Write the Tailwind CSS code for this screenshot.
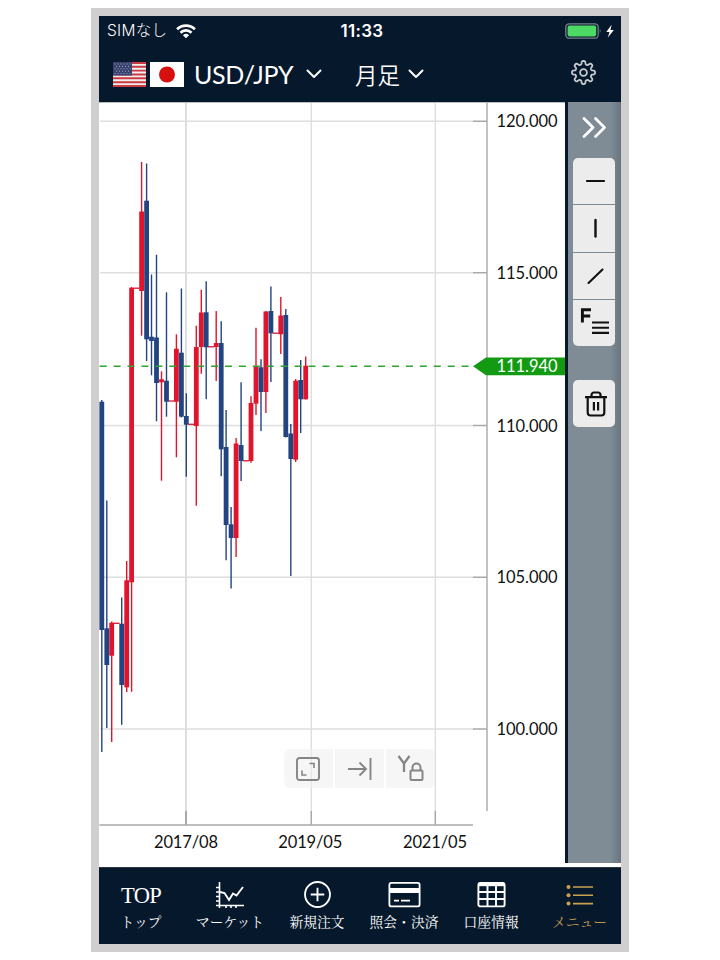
<!DOCTYPE html>
<html lang="ja">

<head>
    <meta charset="UTF-8">
    <meta name="viewport" content="width=device-width, initial-scale=1.0">
    <title>USD/JPY 月足チャート</title>
    <script src="https://cdn.jsdelivr.net/npm/@tailwindcss/browser@4"></script>
</head>

<body class="bg-white h-screen overflow-hidden flex justify-center pt-2">
<div class="w-[538px] h-[944px] border-8 border-[#d0cece] bg-[#06182c] flex flex-col">

    <!-- status bar -->
    <div class="h-[30px] shrink-0 grid grid-cols-3 items-center pl-2 pr-[6px] text-white font-['Inter','Noto_Sans_CJK_JP',sans-serif]">
        <div class="flex items-center gap-[9px]">
            <span class="text-[15.5px] leading-none font-light tracking-[0.3px]">SIMなし</span>
            <svg class="w-5 h-[15px]" viewBox="0 0 20 15" fill="none" stroke="#fff" stroke-width="2.7">
                <path d="M1.1 5.2a12.7 12.7 0 0 1 17.8 0" />
                <path d="M4.5 8.7a7.9 7.9 0 0 1 11 0" />
                <path d="M10 14.2 6.9 11.2a4.6 4.6 0 0 1 6.2 0z" fill="#fff" stroke="none" />
            </svg>
        </div>
        <div class="text-center text-[17px] leading-none font-semibold tracking-[0.3px] pl-[2px]">11:33</div>
        <div class="flex justify-end">
            <svg class="w-[50px] h-4" viewBox="0 0 50 16">
                <rect x=".8" y=".8" width="32.4" height="14.4" rx="3.5" fill="none" stroke="#76818c" stroke-width="1.3" />
                <rect x="2.6" y="2.6" width="28.6" height="10.8" rx="1.8" fill="#4cd964" />
                <path d="M34.8 5.5q1.8 2.5 0 5z" fill="#76818c" />
                <path d="M46.6 1.8 41.3 9h3.2l-1.6 5.4L48.8 7h-3.3z" fill="#fff" />
            </svg>
        </div>
    </div>

    <!-- pair and period -->
    <div class="h-14 shrink-0 flex items-center pl-[14px] pr-6 text-white">
        <svg class="w-[33px] h-[25px]" viewBox="0 0 33 25">
            <rect width="33" height="25" fill="#f3eeee" />
            <path d="M0 1h33M0 4.8h33M0 8.6h33M0 12.5h33M0 16.3h33M0 20.2h33M0 24h33" stroke="#cb3a42" stroke-width="1.92" />
            <rect width="19" height="13.5" fill="#39416f" />
            <path d="M1.5 2h17M3 4.4h15M1.5 6.8h17M3 9.2h15M1.5 11.6h17" stroke="#a3a8c4" stroke-width="1" stroke-dasharray="1 2" />
        </svg>
        <svg class="w-[34px] h-[25px] ml-1" viewBox="0 0 34 25">
            <rect width="34" height="25" fill="#fff" />
            <circle cx="17" cy="12.5" r="8" fill="#d7100f" />
        </svg>
        <span class="ml-[10px] w-[101px] text-[25px] leading-none tracking-[-0.3px] whitespace-nowrap font-['Lato',sans-serif]">USD/JPY</span>
        <svg class="w-4 h-[10px] ml-[11px]" viewBox="0 0 16 10" fill="none" stroke="#fff" stroke-width="2" stroke-linecap="round" stroke-linejoin="round"><path d="M1.5 1.5 8 8l6.5-6.5" /></svg>
        <span class="ml-[33px] w-[46px] text-[22.5px] leading-none whitespace-nowrap font-[350] font-['Noto_Sans_CJK_JP',sans-serif]">月足</span>
        <svg class="w-4 h-[10px] ml-[7px]" viewBox="0 0 16 10" fill="none" stroke="#fff" stroke-width="2" stroke-linecap="round" stroke-linejoin="round"><path d="M1.5 1.5 8 8l6.5-6.5" /></svg>
        <svg id="gear" class="w-[27px] h-[27px] ml-auto mb-1" viewBox="-13.5 -13.5 27 27" fill="none" stroke="#c6cbd0" stroke-width="1.8" stroke-linejoin="round">
            <circle r="3.4" />
        </svg>
    </div>

    <div class="h-[765px] shrink-0 flex bg-white">
        <!-- chart, drawn in screen units -->
        <div class="relative w-[466px] h-[765px]">
            <svg class="w-[466px] h-[765px]" viewBox="99 102 466 765">
                <path d="M99 102.5h466" stroke="#b9bec4" />
                <g stroke="#dedede" stroke-width="1.4">
                    <path d="M186 103v722" stroke-width="2" />
                    <path d="M311.3 103v722M435.3 103v722" />
                    <path d="M100 121.3h374M100 272.7h374M100 425.5h374M100 577.3h374M100 729h374" />
                </g>
                <g stroke="#a9a9a9" stroke-width="1.4">
                    <path d="M473 121.3h14M473 272.7h14M473 425.5h14M473 577.3h14M473 729h14M487 103v708" />
                    <path d="M99.5 825h373.5M311.3 811v14M435.3 811v14" />
                    <path d="M186 811v14" stroke-width="2" />
                </g>
                <g id="candles"></g>
                <path d="M99.7 366.2H473" stroke="#2ea32e" stroke-width="1.5" stroke-dasharray="7 6.92" />
                <path d="M473 366.3 486 357.5h79v17.8h-79z" fill="#129a12" />
                <g font-family="Lato, sans-serif" font-size="16.5" fill="#111">
                    <text x="496.5" y="127.3" textLength="61">120.000</text>
                    <text x="496.5" y="279" textLength="61">115.000</text>
                    <text x="496.5" y="372" textLength="61" fill="#fff">111.940</text>
                    <text x="496.5" y="431.5" textLength="61">110.000</text>
                    <text x="496.5" y="583.2" textLength="61">105.000</text>
                    <text x="496.5" y="735" textLength="61">100.000</text>
                    <text x="154" y="847.5" textLength="64">2017/08</text>
                    <text x="278.3" y="847.5" textLength="64">2019/05</text>
                    <text x="403" y="847.5" textLength="64">2021/05</text>
                </g>
            </svg>

            <!-- chart controls -->
            <div class="absolute left-[185px] top-[647px] flex gap-[2px] w-[151px] h-[39px] rounded-md overflow-hidden">
                <div class="w-[49px] bg-[#f0f0f0]/60 flex items-center justify-center">
                    <svg class="w-6 h-6 -ml-px" viewBox="0 0 24 24" fill="none" stroke="#858585" stroke-width="1.9"><rect x="1" y="1" width="22" height="22" rx="2.5" /><path d="M13.5 6.5h4.5V11M6 13.5V18h4.5" stroke-width="1.6" /></svg>
                </div>
                <div class="w-[49px] bg-[#f0f0f0]/60 flex items-center justify-center">
                    <svg class="w-6 h-6" viewBox="0 0 24 24" fill="none" stroke="#858585" stroke-width="1.9"><path d="M0 12h17.5M11.5 5.5 18 12l-6.5 6.5M22.5 1v22" /></svg>
                </div>
                <div class="w-[49px] bg-[#f0f0f0]/60 flex items-center justify-center">
                    <svg class="w-[27px] h-[26px] -mt-px" viewBox="0 0 27 26" fill="none" stroke="#858585" stroke-width="2"><path d="M1.5 1 7 8.5 12.500 1M7 8.5V17" stroke-width="2.3" /><rect x="13.5" y="15.5" width="12" height="9.5" rx="1" /><path d="M15.5 15v-2.500a4 4 0 0 1 8 0V15" /></svg>
                </div>
            </div>
        </div>

        <!-- drawing tools -->
        <div class="w-[56px] h-[761px] border-l-[3px] border-[#06182c] bg-linear-to-r from-[#808c95] from-80% to-[#67747e] flex flex-col items-center pr-px">
            <svg class="w-6 h-[21px] mt-[15px] shrink-0" viewBox="0 0 24 21" fill="none" stroke="#fff" stroke-width="2.7" stroke-linecap="round" stroke-linejoin="round"><path d="m2 1.5 9 9-9 9M13.500 1.5l9 9-9 9" /></svg>
            <div class="mt-5 w-[42px] h-[188px] rounded-[5px] overflow-hidden shrink-0 grid grid-rows-4 gap-px bg-[#7e8b95]">
                <div class="bg-[#ececec] flex items-center justify-center pl-1"><svg class="w-5 h-5" viewBox="0 0 20 20" stroke="#111" stroke-width="2.2" stroke-linecap="round"><path d="M1 10h17" /></svg></div>
                <div class="bg-[#ececec] flex items-center justify-center pl-1"><svg class="w-5 h-5" viewBox="0 0 20 20" stroke="#111" stroke-width="2.4" stroke-linecap="round"><path d="M9.5 2v16.500" /></svg></div>
                <div class="bg-[#ececec] flex items-center justify-center pl-1"><svg class="w-5 h-5" viewBox="0 0 20 20" stroke="#111" stroke-width="2.1" stroke-linecap="round"><path d="M2.5 17 16.500 3.5" /></svg></div>
                <div class="bg-[#ececec] flex items-center justify-center"><svg class="w-[30px] h-[27px] -mt-1" viewBox="0 0 30 27" stroke="#111" stroke-width="2.1" fill="none"><path d="M3.4 15.500V2.7H12M3.4 9h7.8" stroke-width="2.9" /><path d="M13 15.500h17M13 20.800h17M13 25.900h17" /></svg></div>
            </div>
            <div class="mt-[34px] w-[42px] h-[47px] rounded-[5px] bg-[#ececec] shrink-0 flex items-center justify-center pl-[3px]">
                <svg class="w-6 h-[26px]" viewBox="0 0 24 26" stroke="#111" stroke-width="2.2" fill="none" stroke-linejoin="round"><path d="M1 6.2h22M3.7 6.2v15.3a3 3 0 0 0 3 3h10.6a3 3 0 0 0 3-3V6.2M7.5 5.5V4A2.5 2.5 0 0 1 10 1.5h4A2.5 2.5 0 0 1 16.500 4v1.5M9.9 11v8.5M14.1 11v8.5" /></svg>
            </div>
        </div>
    </div>

    <!-- bottom navigation -->
    <div class="h-[77px] shrink-0 grid grid-cols-[84px_94px_80px_94px_80px_90px] text-white border-t border-[#30363d] text-[13.8px] leading-none whitespace-nowrap font-['Noto_Serif_CJK_JP','Noto_Sans_CJK_JP',serif]">
        <div class="flex flex-col items-center pt-[14px]">
            <div class="h-[26px] flex items-center pt-[3px] text-[22.5px] font-['Liberation_Serif',serif] tracking-[-0.7px]">TOP</div>
            <div class="mt-[7px]">トップ</div>
        </div>
        <div class="flex flex-col items-center pt-[14px]">
            <svg class="w-7 h-[26px]" viewBox="0 0 28 26" fill="none" stroke="#fff" stroke-width="1.6"><path d="M3.5 0v26M0 23.5h28M0 5.5h3.5M0 10h3.5M0 14.5h3.5M0 19h3.5M10 23.5V26M15 23.5V26M20 23.5V26" /><path d="m4 10 4.500 1 4.500 7 4-6.500 3.500 2L27 5" stroke-width="1.9" /></svg>
            <div class="mt-[7px]">マーケット</div>
        </div>
        <div class="flex flex-col items-center pt-[13px]">
            <svg class="w-[27px] h-[27px]" viewBox="0 0 26 26" fill="none" stroke="#fff" stroke-width="1.8"><circle cx="13" cy="13" r="12" /><path d="M13 6.5v13M6.5 13h13" /></svg>
            <div class="mt-[7px]">新規注文</div>
        </div>
        <div class="flex flex-col items-center pt-[14px]">
            <svg class="w-[33px] h-[26px]" viewBox="0 0 32 26" fill="none" stroke="#fff" stroke-width="1.8"><rect x=".9" y=".9" width="30.2" height="23.5" rx="2" /><path d="M1 8.500h30" stroke-width="5" /><path d="M5.500 18.700h5M12.500 18.700h9" /></svg>
            <div class="mt-[7px]">照会・決済</div>
        </div>
        <div class="flex flex-col items-center pt-[14px]">
            <svg class="w-[29px] h-[26px]" viewBox="0 0 28 26" fill="none" stroke="#fff" stroke-width="1.9"><rect x=".9" y=".9" width="26.2" height="23.5" rx="2" /><path d="M1 2.500h26" stroke-width="3.4" /><path d="M1 10h26M1 17h26M10 2v22M18.500 2v22" /></svg>
            <div class="mt-[7px]">口座情報</div>
        </div>
        <div class="flex flex-col items-center pt-[14px] pl-[7px] text-[#c19a4b]">
            <svg class="w-7 h-[26px]" viewBox="0 0 28 26" fill="#c9a14f"><circle cx="2.500" cy="5" r="2" /><circle cx="2.500" cy="13.300" r="2" /><circle cx="2.500" cy="21.600" r="2" /><path d="M7 4.200h20v1.600H7zM7 12.500h20v1.600H7zM7 20.800h20v1.600H7z" /></svg>
            <div class="mt-[7px]">メニュー</div>
        </div>
    </div>
</div>

<script>
    // [x, high, bodyTop, bodyBottom, low, up]
    const candles = [
        [101.8, 400, 401.7, 630, 752, 0], [106.8, 500.5, 628.3, 665, 728, 0],
        [111.7, 621.5, 622.7, 655.7, 742, 1], [121.7, 597.5, 623.7, 685, 724.7, 0],
        [126.7, 561, 580.3, 687.3, 692, 1], [131.6, 287, 287.7, 582.3, 691.7, 1],
        [141.6, 162, 211.5, 291, 335.7, 1], [146.6, 163.5, 200.7, 339.3, 361, 0],
        [151.5, 274.5, 336.7, 341, 375.3, 0], [156.5, 254.7, 337.5, 383, 421.3, 0],
        [161.5, 371.3, 379.3, 382.3, 480.7, 1], [166.5, 292.3, 380.7, 401.7, 416.7, 0],
        [176.4, 334.3, 348.7, 401.7, 457.3, 1], [181.4, 288.5, 352.7, 416.7, 417.5, 0],
        [186.3, 393.3, 416, 424.7, 476.7, 0], [196.3, 325.7, 347, 426, 505.7, 1],
        [201.3, 289.7, 312.5, 347, 373.7, 1], [206.2, 281.3, 312.3, 347.3, 399.3, 0],
        [216.2, 311, 343, 347, 381, 1], [221.2, 321.3, 343, 449.3, 476.3, 0],
        [226.1, 410, 447, 525, 560.3, 0], [231.1, 507, 524.3, 538, 588.5, 0],
        [236.1, 438, 443.5, 538, 557, 1], [241.1, 382.3, 445, 461, 481, 0],
        [251, 396.3, 403, 461, 462.7, 1], [256, 327.7, 366.7, 403.7, 415, 1],
        [261, 359.3, 367.3, 392, 431, 0], [265.9, 311, 311.5, 392, 413, 1],
        [270.9, 286.5, 311, 333.3, 382, 0], [280.8, 297, 315.5, 334.3, 354, 1],
        [285.8, 309, 315, 437, 437.5, 0], [290.8, 424, 433.5, 459, 576, 0],
        [295.7, 379, 380.7, 459.7, 462, 1], [300.7, 360, 380, 399.3, 433, 0],
        [305.7, 356.5, 365.7, 399.3, 399.5, 1]
    ];
    // months that open and close at the same price
    const flats = [[116.6, 623.3], [136.6, 288.2], [171.5, 401], [191.3, 424.3], [211.2, 346.8], [246, 460.8], [275.9, 333.2]];

    let out = '';
    flats.forEach(function (f) {
        out += `<path d="M${f[0] - 3} ${f[1]}h6" stroke="#e0142c" stroke-width="1.3"/>`;
    });
    candles.forEach(function (c) {
        const color = c[5] ? '#e0142c' : '#224480';
        out += `<path d="M${c[0]} ${c[1]}V${c[4]}" stroke="${color}" stroke-width="1.4"/>`;
        out += `<rect x="${c[0] - 2.4}" y="${c[2]}" width="4.8" height="${c[3] - c[2]}" fill="${color}"/>`;
    });
    document.getElementById('candles').innerHTML = out;

    // eight-toothed gear outline
    let d = '';
    for (let i = 0; i <= 144; i++) {
        const a = i / 144 * Math.PI * 2;
        const r = 9.9 + 1.7 * Math.tanh(2 * Math.cos(8 * a));
        d += (i ? 'L' : 'M') + (r * Math.sin(a)).toFixed(2) + ' ' + (-r * Math.cos(a)).toFixed(2);
    }
    document.getElementById('gear').insertAdjacentHTML('beforeend', `<path d="${d}Z"/>`);
</script>
</body>

</html>
